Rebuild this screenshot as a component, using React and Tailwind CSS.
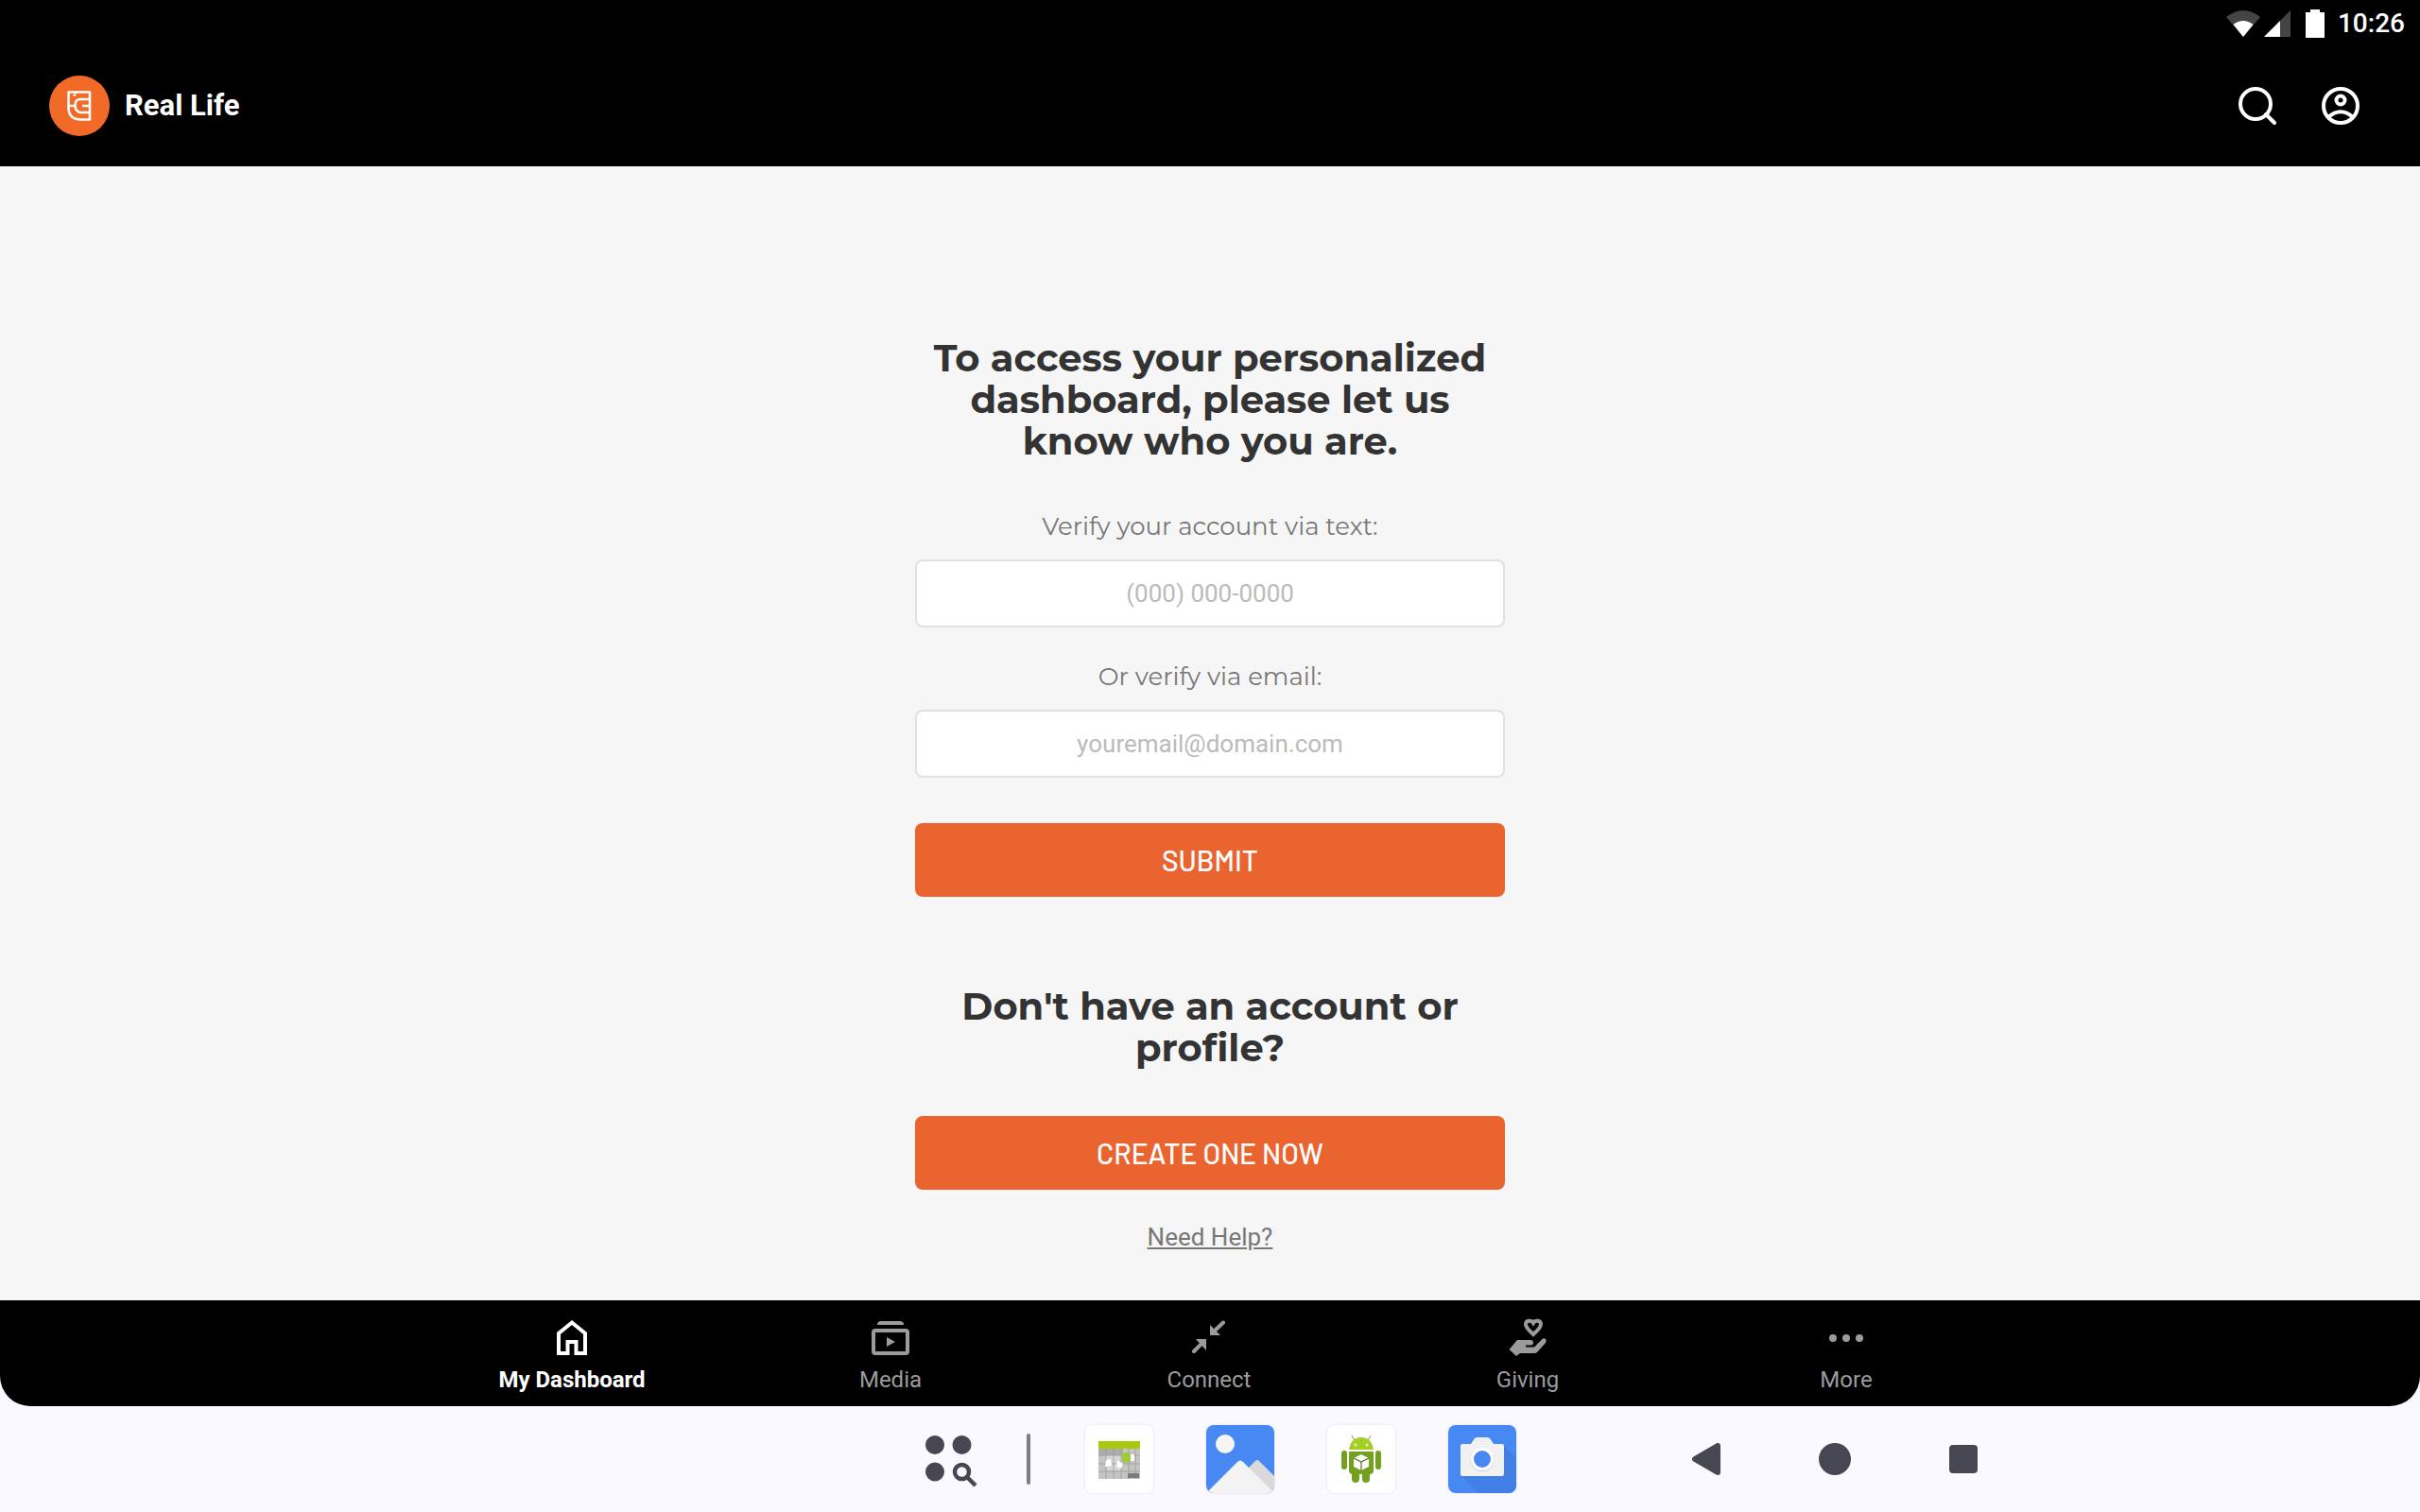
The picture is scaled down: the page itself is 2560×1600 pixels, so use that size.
import { useState } from "react"

const navItems = [
  { id: "dashboard", label: "My Dashboard", Icon: HomeIcon },
  { id: "media", label: "Media", Icon: MediaIcon },
  { id: "connect", label: "Connect", Icon: ConnectIcon },
  { id: "giving", label: "Giving", Icon: GivingIcon },
  { id: "more", label: "More", Icon: MoreIcon },
]

const dockApps = [
  { label: "Calendar", Icon: CalendarApp },
  { label: "Gallery", Icon: GalleryApp },
  { label: "Package", Icon: AndroidApp },
  { label: "Camera", Icon: CameraApp },
]

function HomeIcon() {
  return (
    <svg viewBox="0 0 40 40" className="size-10" fill="none" stroke="currentColor" strokeWidth="4">
      <path d="M6 37V16L20 4.500L34 16V37H24.500V25H15.500V37Z" />
    </svg>
  )
}

function MediaIcon() {
  return (
    <svg viewBox="0 0 40 40" className="size-10" fill="currentColor">
      <path d="M6 7Q6 3 10 3H30Q34 3 34 7Z" />
      <rect x="2" y="13" width="36" height="24" rx="2" fill="none" stroke="currentColor" strokeWidth="4" />
      <path d="M16 20V30L25 25Z" />
    </svg>
  )
}

function ConnectIcon() {
  return (
    <svg viewBox="0 0 40 40" className="size-10" fill="currentColor">
      <path d="M6 22H17V34Z" />
      <path d="M21 7V18H32Z" />
      <path d="M4 35L14 25M35 4.500L24 15" stroke="currentColor" strokeWidth="4" strokeLinecap="round" />
    </svg>
  )
}

function GivingIcon() {
  return (
    <svg viewBox="0 0 40 40" className="size-10 overflow-visible" fill="currentColor">
      <path
        d="M26 17C21 12.500 18 9.500 18 6.500C18 2 24 1.500 26 5C28 1.500 34 2 34 6.500C34 9.500 31 12.500 26 17Z"
        fill="none"
        stroke="currentColor"
        strokeWidth="4"
      />
      <path d="M9 23H23Q26 23 26 26Q26 28.500 23 28.500H18V30.500H27L35 22.500Q37 20.500 39 22Q40.500 23.500 39 26L30 36Q29 37 27 37H12L8 40L0.500 33Z" />
    </svg>
  )
}

function MoreIcon() {
  return (
    <svg viewBox="0 0 40 40" className="size-10" fill="currentColor">
      <circle cx="6" cy="21" r="4" />
      <circle cx="20" cy="21" r="4" />
      <circle cx="34" cy="21" r="4" />
    </svg>
  )
}

function Logo() {
  return (
    <svg viewBox="0 0 64 64" className="size-16" fill="none">
      <circle cx="32" cy="32" r="32" fill="#f26a27" />
      <g stroke="#fff" strokeWidth="2.500" strokeLinejoin="round">
        <path d="M20.500 17.500H43V25H33Q27.500 25 27.500 31.500T33 39H43V46.500H34Q20.500 46.500 20.500 34Z" />
        <path d="M43 25V39M43 32H35M20.500 32H27.500" />
        <path d="M27.500 17.500V21H25" strokeWidth="1.500" />
      </g>
    </svg>
  )
}

function CalendarApp() {
  return (
    <svg viewBox="0 0 72 72" className="size-18 rounded-lg bg-white">
      <rect x="14" y="17" width="44" height="40" fill="#c4c4c4" />
      <rect x="14" y="17" width="44" height="8" fill="#a9c90e" />
      <path d="M14 25H40V32H14Z" fill="#adadad" />
      <path d="M22 32H38V48H22Z" fill="#d6d6d6" />
      <path d="M14 32H58M14 41H58M14 49H58M22 25V57M30 25V57M38 25V57M46 25V57M53 25V57" stroke="#999" strokeWidth="0.700" />
      <path d="M45 51H57V56H45Z" fill="#7b7b7b" />
      <path d="M38 30L47 29L48 39L40 40Z" fill="#9ccc35" />
      <path d="M22 37L27 36L28 43L21 44ZM34 37L40 41L38 46L33 44ZM48 31L52 31L52 38L48 38Z" fill="#fff" />
    </svg>
  )
}

function GalleryApp() {
  return (
    <svg viewBox="0 0 72 72" className="size-18 rounded-lg">
      <rect width="72" height="72" fill="#4788f2" />
      <circle cx="20" cy="20" r="10" fill="#f5f5f5" />
      <path d="M40 50L52 38Q54 36 56 38L72 54V72H60Z" fill="#d9d9d9" />
      <path d="M0 72L33 39Q36 36 39 39L72 72Z" fill="#f3f3f3" />
    </svg>
  )
}

function AndroidApp() {
  return (
    <svg viewBox="0 0 72 72" className="size-18 rounded-lg bg-white">
      <path d="M29 16L26 11M43 16L46 11" stroke="#9aab77" strokeWidth="1.200" />
      <g fill="#73a01f">
        <rect x="15" y="27" width="6" height="20" rx="3" />
        <rect x="51" y="27" width="6" height="20" rx="3" />
        <rect x="26" y="46" width="8" height="15" rx="4" />
        <rect x="37" y="46" width="8" height="15" rx="4" />
        <path d="M23 28H49V48Q49 52 45 52H27Q23 52 23 48Z" />
      </g>
      <path d="M23 26Q25 13 36 13T49 26Z" fill="#a4cf26" />
      <circle cx="30" cy="21" r="1.500" fill="#e4f2b0" />
      <circle cx="42" cy="21" r="1.500" fill="#e4f2b0" />
      <path d="M36 31L44 35V44L36 48L28 44V35Z" fill="#fff" />
      <path d="M28 35L36 39L44 35M36 39V48" stroke="#50701c" strokeWidth="1.200" fill="none" />
    </svg>
  )
}

function CameraApp() {
  return (
    <svg viewBox="0 0 72 72" className="size-18 rounded-lg">
      <rect width="72" height="72" fill="#4788f2" />
      <path d="M58 21L72 35V72H31L14 53Z" fill="#417fe6" />
      <path d="M15 20H24L28 14Q29 13 31 13H41Q43 13 44 14L48 20H57Q59 20 59 22V52Q59 54 57 54H15Q13 54 13 52V22Q13 20 15 20Z" fill="#f1f1f1" />
      <circle cx="36" cy="37" r="12.500" fill="#dcdcdc" />
      <circle cx="36" cy="36" r="12" fill="#fff" />
      <circle cx="36" cy="36" r="9" fill="#4788f2" />
    </svg>
  )
}

function StatusBar() {
  return (
    <div className="flex h-12 items-center justify-end bg-black pt-0.5 pr-4 text-white">
      <svg viewBox="0 0 36 28" className="mr-1 h-7 w-9">
        <path d="M0 7Q18 -7 36 7L18 28Z" fill="#444" />
        <path d="M7.500 15Q18 7 28.500 15L18 28Z" fill="#fff" />
      </svg>
      <svg viewBox="0 0 28 28" className="mr-4 size-7">
        <path d="M28 0V28H0Z" fill="#444" />
        <path d="M17 11V28H0Z" fill="#fff" />
      </svg>
      <svg viewBox="0 0 20 30" className="mr-3.5 h-[30px] w-5" fill="#fff">
        <path d="M5 0H15V3H20V30H0V3H5Z" />
      </svg>
      <span className="text-[28px] leading-8 font-medium">10:26</span>
    </div>
  )
}

function Header() {
  return (
    <header className="flex h-32 items-center justify-between bg-black pr-16 pl-13 text-white">
      <div className="flex items-center gap-4">
        <Logo />
        <span className="text-[31px] leading-10 font-bold">Real Life</span>
      </div>
      <div className="flex items-center gap-12">
        <button type="button" aria-label="Search">
          <svg viewBox="0 0 40 40" className="size-10" fill="none" stroke="currentColor" strokeWidth="4" strokeLinecap="round">
            <circle cx="18" cy="18" r="16" />
            <path d="M29 29L38 38" />
          </svg>
        </button>
        <button type="button" aria-label="Account">
          <svg viewBox="0 0 40 40" className="size-10" fill="none" stroke="currentColor" strokeWidth="4">
            <circle cx="20" cy="20" r="18" />
            <circle cx="20" cy="14" r="4.500" />
            <path d="M7 32Q20 20.500 33 32" />
          </svg>
        </button>
      </div>
    </header>
  )
}

function Field({ id, label, ...props }) {
  return (
    <div className="flex flex-col items-center gap-[19px]">
      <label htmlFor={id} className="font-['Montserrat','Inter',sans-serif] text-[26px] leading-8 text-[#777]">
        {label}
      </label>
      <input
        id={id}
        className="h-18 w-full rounded-lg border-2 border-[#e0e0e0] bg-white text-center text-[26px] text-[#333] placeholder:text-[#bbb]"
        {...props}
      />
    </div>
  )
}

function SignIn() {
  const [phone, setPhone] = useState("")
  const [email, setEmail] = useState("")

  const handleSubmit = (e) => {
    e.preventDefault()
  }

  return (
    <main className="flex flex-1 flex-col items-center bg-[#f6f6f6] pt-[181px] pb-10">
      <div className="flex w-[624px] flex-col items-center">
        <h1 className="px-4 text-center font-['Montserrat','Inter',sans-serif] text-[40px] leading-11 font-bold text-[#333]">
          To access your personalized dashboard, please let us know who you are.
        </h1>
        <form onSubmit={handleSubmit} className="mt-13 flex w-full flex-col">
          <Field
            id="phone"
            label="Verify your account via text:"
            type="tel"
            placeholder="(000) 000-0000"
            value={phone}
            onChange={(e) => setPhone(e.target.value)}
          />
          <div className="mt-9">
            <Field
              id="email"
              label="Or verify via email:"
              type="email"
              placeholder="youremail@domain.com"
              value={email}
              onChange={(e) => setEmail(e.target.value)}
            />
          </div>
          <button
            type="submit"
            className="mt-12 h-[78px] rounded-lg bg-[#e9642f] font-['Barlow','Roboto',sans-serif] text-[30px] font-medium text-white"
          >
            SUBMIT
          </button>
        </form>
        <h2 className="mt-[94px] px-4 text-center font-['Montserrat','Inter',sans-serif] text-[40px] leading-11 font-bold text-[#333]">
          Don't have an account or profile?
        </h2>
        <button
          type="button"
          className="mt-[50px] h-[78px] w-full rounded-lg bg-[#e9642f] font-['Barlow','Roboto',sans-serif] text-[30px] font-medium text-white"
        >
          CREATE ONE NOW
        </button>
        <a href="#help" className="mt-8 text-[26px] leading-9 text-[#777] underline">
          Need Help?
        </a>
      </div>
    </main>
  )
}

function BottomNav() {
  const [active, setActive] = useState("dashboard")

  return (
    <nav className="flex h-28 justify-center rounded-b-[32px] bg-black pr-0.5">
      {navItems.map(({ id, label, Icon }) => (
        <button
          key={id}
          type="button"
          onClick={() => setActive(id)}
          className={`flex w-[337px] flex-col items-center gap-[9px] pt-[19px] text-2xl ${
            active === id ? "font-bold text-white" : "text-[#9b9b9b]"
          }`}
        >
          <Icon />
          {label}
        </button>
      ))}
    </nav>
  )
}

function Taskbar() {
  return (
    <footer className="grid h-28 grid-cols-[1fr_auto_1fr] items-center pl-3 text-[#474753]">
      <div className="col-start-2 flex items-center">
        <button type="button" aria-label="All apps" className="flex size-18 items-center justify-center">
          <svg viewBox="0 0 56 56" className="size-14 overflow-visible" fill="currentColor">
            <circle cx="13" cy="13" r="10" />
            <circle cx="41.500" cy="13" r="10" />
            <circle cx="13" cy="41.500" r="10" />
            <circle cx="41.500" cy="41.500" r="7.500" fill="none" stroke="currentColor" strokeWidth="4.500" />
            <path d="M47 47L56 56" stroke="currentColor" strokeWidth="4.500" />
          </svg>
        </button>
        <div className="mr-[58px] ml-[46px] h-[54px] w-1 rounded-full bg-[#7e7e84]" />
        <div className="flex gap-14">
          {dockApps.map(({ label, Icon }) => (
            <button key={label} type="button" aria-label={label} className="rounded-lg shadow-[0_0_3px_rgba(0,0,0,0.12)]">
              <Icon />
            </button>
          ))}
        </div>
      </div>
      <div className="ml-[133px] flex">
        <button type="button" aria-label="Back" className="flex w-[136px] justify-center">
          <svg viewBox="0 0 34 34" className="size-[34px]" fill="currentColor" stroke="currentColor" strokeWidth="6" strokeLinejoin="round">
            <path d="M5 17L29 3V31Z" />
          </svg>
        </button>
        <button type="button" aria-label="Home" className="flex w-[136px] justify-center">
          <span className="size-[34px] rounded-full bg-current" />
        </button>
        <button type="button" aria-label="Recent apps" className="flex w-[136px] items-center justify-center">
          <span className="size-[30px] rounded-sm bg-current" />
        </button>
      </div>
    </footer>
  )
}

function App() {
  return (
    <div className="flex min-h-screen flex-col bg-[#faf9ff] font-['Roboto',sans-serif]">
      <StatusBar />
      <Header />
      <SignIn />
      <BottomNav />
      <Taskbar />
    </div>
  )
}

export default App
